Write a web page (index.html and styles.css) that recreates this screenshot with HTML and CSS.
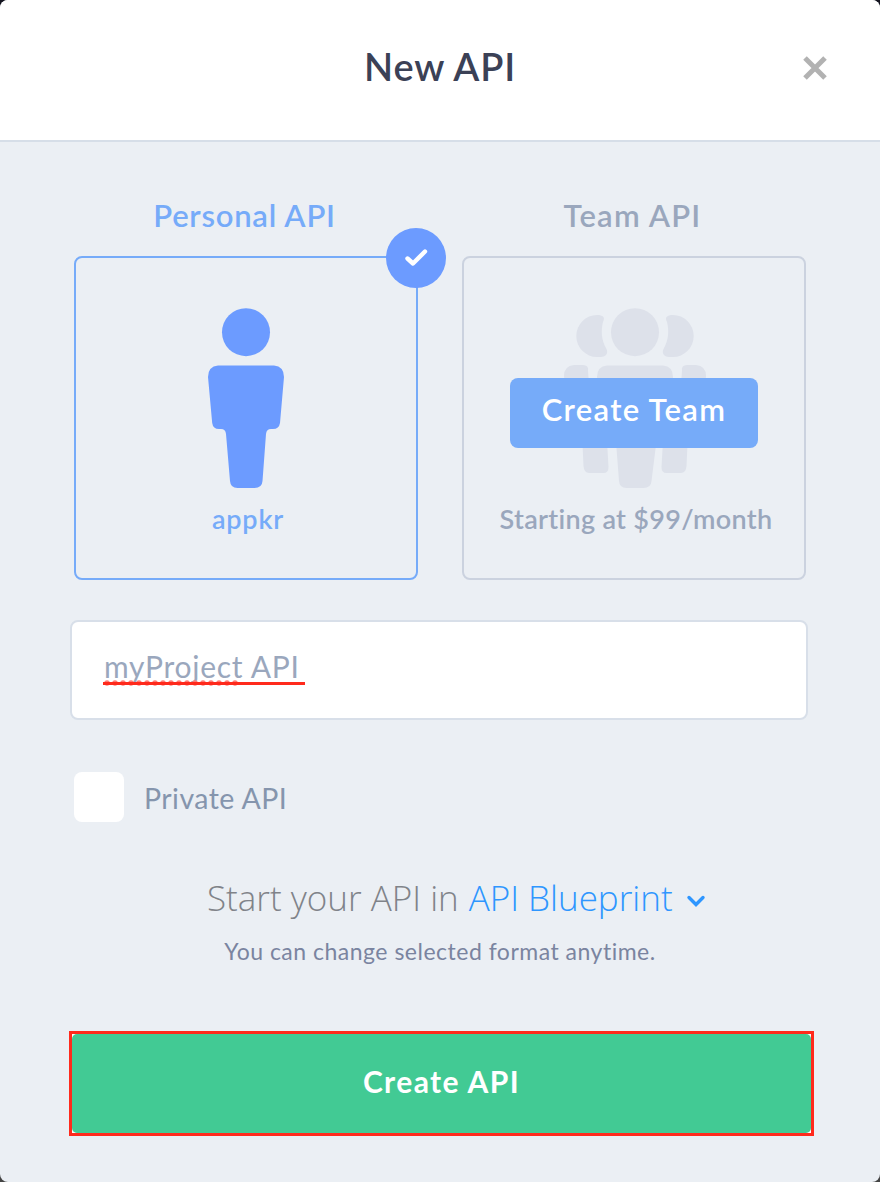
FILE: index.html
```html
<!DOCTYPE html>
<html lang="en">
<head>
<meta charset="utf-8">
<title>New API</title>
<link rel="stylesheet" href="styles.css">
</head>
<body>
<main class="modal">
  <header class="modal-header">
    <h1 class="title">New API</h1>
    <button class="close" aria-label="Close">
      <svg width="26" height="26" viewBox="0 0 26 26"><path d="M3 3 23 23M23 3 3 23" stroke="#b2b2b2" stroke-width="5" fill="none"/></svg>
    </button>
  </header>
  <form class="modal-body">
    <section class="plans">
      <div class="plan plan-active">
        <h2 class="plan-title">Personal API</h2>
        <div class="card">
          <span class="badge">
            <svg width="60" height="60" viewBox="0 0 60 60"><path d="M21.500 30.500 27 35.500 39 23.500" stroke="#fff" stroke-width="4.400" stroke-linecap="round" stroke-linejoin="round" fill="none"/></svg>
          </span>
          <svg class="figure" width="76" height="180" viewBox="0 0 76 180" fill="#6c9bff">
            <circle cx="38" cy="24.200" r="24"/>
            <path d="M10 57.500H66Q76 58.500 76 69L72 115Q71 121 65 121H63Q58.500 121 58 126L54.500 173Q54 180 46.500 180H29.500Q22.500 180 22 173L18 126Q17.500 121 13 121H11Q5 121 4.200 115L0 69Q0 58.500 10 57.500Z"/>
          </svg>
          <p class="caption owner">appkr</p>
        </div>
      </div>
      <div class="plan">
        <h2 class="plan-title team-title">Team API</h2>
        <div class="card">
          <svg class="figure team-figure" width="142" height="180" viewBox="0 0 142 180" fill="#dde1ea">
            <circle cx="71" cy="24.200" r="24"/>
            <path d="M43 57.500H99Q109 58.500 109 69L105 115Q104 121 98 121H94L87.500 173Q87 180 79.500 180H62.500Q55.500 180 55 173L51 121H44Q38 121 37.200 115L33 69Q33 58.500 43 57.500Z"/>
            <g id="side">
              <path d="M33 7C39 7 41.500 9 39 14C37 22 37 32 42.500 41C44.500 45 42 49 37 49H33A20.700 21 0 0 1 33 7Z"/>
              <path d="M10 57H19Q25 57 24 63L28 113L42 115L44.500 159Q44.500 165 39.500 165H25Q20 165 19.500 158L17.500 115H9Q5 115 4.500 110L0 68Q0 58 10 57Z"/>
            </g>
            <use href="#side" transform="translate(142 0) scale(-1 1)"/>
          </svg>
          <button type="button" class="create-team">Create Team</button>
          <p class="caption price">Starting at $99/month</p>
        </div>
      </div>
    </section>

    <div class="name-field">
      <span class="name-text">myProject API
        <svg class="underline" width="202" height="6" viewBox="0 0 202 6">
          <path d="M4 3H137" stroke="#ff7b75" stroke-width="5.500" stroke-linecap="round" stroke-dasharray="0 8"/>
          <path d="M0 3.500H202" stroke="#ff2a1c" stroke-width="3"/>
        </svg>
      </span>
    </div>

    <label class="private"><span class="checkbox"></span><span class="private-text">Private API</span></label>

    <p class="format"><span class="format-lead">Start your API in</span><a class="format-link">API Blueprint</a>
      <svg width="20" height="14" viewBox="0 0 20 14"><path d="M3 3.500 10 10.500 17 3.500" stroke="#2e96ff" stroke-width="3.400" stroke-linecap="round" fill="none"/></svg>
    </p>
    <p class="hint">You can change selected format anytime.</p>

    <div class="submit-frame"><button type="button" class="submit">Create API</button></div>
  </form>
</main>
</body>
</html>
```
FILE: styles.css
```css
* { box-sizing: border-box; }

body {
  margin: 0;
  background: linear-gradient(#14141f 50%, #444 50%);
  font-family: Lato, "Liberation Sans", sans-serif;
}

h1, h2, p { margin: 0; }

button {
  padding: 0;
  border: 0;
  font-family: inherit;
}

.modal {
  width: 880px;
  height: 1182px;
  overflow: hidden;
  border-radius: 8px;
  background: #ebeff4;
}

.modal-header {
  display: grid;
  grid-template-columns: 100px 1fr 100px;
  height: 142px;
  padding: 0 15px;
  border-bottom: 2px solid #d6dee8;
  background: #fff;
}

.title {
  grid-column: 2;
  padding-top: 42px;
  color: #3b4156;
  font-size: 38px;
  font-weight: 600;
  letter-spacing: 0.8px;
  line-height: 48px;
  text-align: center;
}

.close {
  justify-self: center;
  height: 26px;
  margin-top: 55px;
  background: none;
}

.close svg { display: block; }

.modal-body { padding: 53px 66px 0 70px; }

.plans {
  display: flex;
  gap: 44px;
  padding-left: 4px;
}

.plan {
  width: 344px;
  color: #9aa7bd;
}

.plan-active { color: #76abf9; }

.plan-title {
  height: 61px;
  padding-right: 3px;
  font-size: 31px;
  font-weight: 600;
  letter-spacing: 0.75px;
  line-height: 40px;
  text-align: center;
}

.team-title { letter-spacing: 1.2px; }

.card {
  position: relative;
  display: flex;
  flex-direction: column;
  align-items: center;
  height: 324px;
  padding-top: 50px;
  border: 2px solid #cbd2df;
  border-radius: 8px;
}

.plan-active .card { border-color: #76abf9; }

.badge {
  position: absolute;
  top: -30px;
  right: -30px;
  width: 60px;
  height: 60px;
  border-radius: 50%;
  background: #6c9bff;
}

.badge svg, .figure { display: block; }

.team-figure { margin-left: 2px; }

.create-team {
  position: absolute;
  top: 120px;
  left: 46px;
  width: 248px;
  height: 70px;
  padding-bottom: 8px;
  border-radius: 8px;
  background: #76abf9;
  color: #fff;
  font-size: 31px;
  font-weight: 600;
  letter-spacing: 1.3px;
}

.caption {
  padding: 13px 0 0 4px;
  font-size: 27px;
  font-weight: 600;
  line-height: 36px;
  white-space: nowrap;
}

.owner { letter-spacing: 0.8px; }

.price { letter-spacing: 0.3px; }

.name-field {
  width: 738px;
  height: 100px;
  margin-top: 40px;
  padding: 24px 32px;
  border: 2px solid #d8dfe9;
  border-radius: 8px;
  background: #fff;
}

.name-text {
  position: relative;
  color: #9aa7bd;
  font-size: 30px;
  letter-spacing: 0.75px;
  line-height: 40px;
}

.underline {
  position: absolute;
  top: 32px;
  left: -1px;
}

.private {
  display: flex;
  gap: 20px;
  height: 50px;
  margin: 52px 0 0 4px;
  color: #8595ad;
  font-size: 28.500px;
  letter-spacing: 0.45px;
  line-height: 52px;
}

.checkbox {
  width: 50px;
  height: 50px;
  border-radius: 8px;
  background: #fff;
}

.format {
  display: flex;
  align-items: center;
  height: 60px;
  margin: 45px 0 0 137px;
  color: #808389;
  font-family: "Open Sans", sans-serif;
  font-size: 35px;
  font-weight: 300;
  white-space: nowrap;
}

.format-link {
  margin: 0 13px 0 10px;
  color: #2e96ff;
}

.format svg { margin-top: 8px; }

.hint {
  height: 30px;
  margin-top: 9px;
  padding-right: 4px;
  color: #7a84a0;
  font-size: 23px;
  letter-spacing: 0.5px;
  line-height: 30px;
  text-align: center;
}

.submit-frame {
  width: 745px;
  height: 105px;
  margin: 65px 0 0 -1px;
  border: 3px solid #ff2a1c;
  background: #fff;
}

.submit {
  display: block;
  width: 100%;
  height: 100%;
  padding-bottom: 5px;
  border-radius: 5px;
  background: #42ca94;
  color: #fff;
  font-size: 30px;
  font-weight: 700;
  letter-spacing: 1.4px;
}
```
